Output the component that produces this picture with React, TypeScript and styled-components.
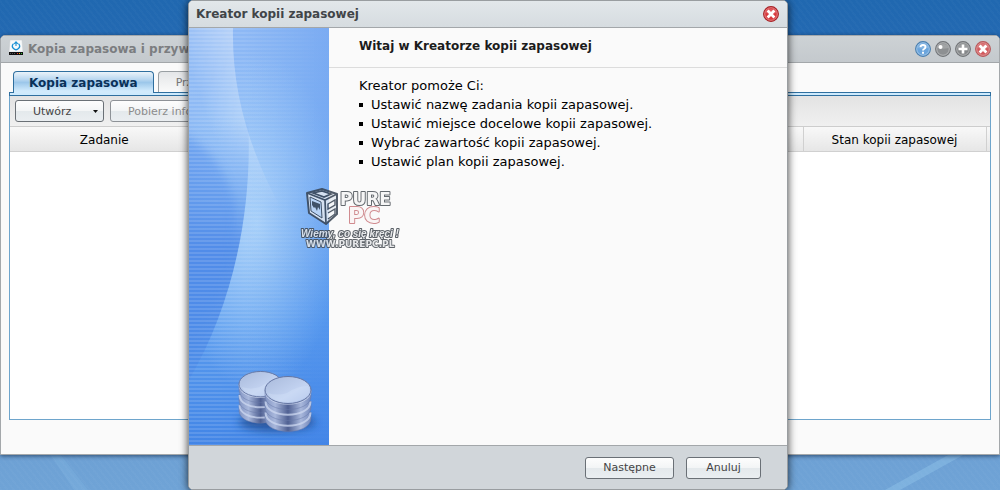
import React from "react";
import styled, { createGlobalStyle } from "styled-components";

const GlobalStyle = createGlobalStyle`
  * { box-sizing: border-box; }
  body { margin: 0; }
  body, button { font-family: "DejaVu Sans", Verdana, sans-serif; font-size: 11px; }
`;

const Desktop = styled.main`
  position: relative;
  min-height: 100vh;
  padding-top: 35px;
  overflow: hidden;
  background:
    repeating-linear-gradient(52deg, rgba(255, 255, 255, 0.02) 0 2px, transparent 2px 5px),
    linear-gradient(#2068b0 0, #2369b2 35px, #6c9fd3 430px, #6fa3d6 100%);
`;

const DesktopGlow = styled.svg`
  position: absolute;
  inset: auto 0 0 0;
  width: 100%;
  height: 40px;
`;

const TitleBar = styled.header<{ $active?: boolean }>`
  display: flex;
  align-items: center;
  gap: 5px;
  height: 27px;
  padding: ${(p) => (p.$active ? "0 8px 0 7px" : "0 8px")};
  border-bottom: 1px solid #a3a7aa;
  border-radius: 4px 4px 0 0;
  background: ${(p) =>
    p.$active ? "linear-gradient(#e2e7ea, #d6dce0)" : "linear-gradient(#cdd2d5, #c4c9cd)"};
  color: ${(p) => (p.$active ? "#414548" : "#7b7d80")};
`;

const WindowTitle = styled.h1`
  flex: 1;
  margin: 0;
  font-size: 12px;
  line-height: 16px;
  white-space: nowrap;
`;

const WindowFrame = styled.section`
  position: relative;
  border: 1px solid #a4a8ab;
  border-radius: 5px 5px 0 0;
  background: #fafafa;
  box-shadow: 0 1px 4px rgba(0, 20, 50, 0.6);
`;

const WindowBody = styled.div`
  padding: 8px 8px 34px;
`;

const Controls = styled.div`
  display: flex;
  gap: 4px;
`;

const RoundButton = styled.button`
  display: block;
  width: 16px;
  height: 16px;
  padding: 0;
  border: 0;
  background: none;
  svg { display: block; }
`;

const TabStrip = styled.div`
  display: flex;
  gap: 4px;
  padding: 0 4px;
  height: 21px;
`;

const Tab = styled.button<{ $selected?: boolean }>`
  height: ${(p) => (p.$selected ? 22 : 21)}px;
  padding: 0 ${(p) => (p.$selected ? 15 : 17)}px;
  border: 1px solid ${(p) => (p.$selected ? "#2f6f9f" : "#999fa3")};
  border-bottom: 0;
  border-radius: 4px 4px 0 0;
  background: ${(p) =>
    p.$selected
      ? "linear-gradient(#eaf3fa 0, #b9d7f0 35%, #9cc7ea 50%, #d0eafc 90%)"
      : "linear-gradient(#e4e6e8, #fafafa)"};
  color: ${(p) => (p.$selected ? "#0a3159" : "#777")};
  font-size: ${(p) => (p.$selected ? 12 : 11)}px;
  font-weight: ${(p) => (p.$selected ? "bold" : "normal")};
  white-space: nowrap;
`;

const Panel = styled.div`
  border: 1px solid #6ea5cc;
  border-top: 0;
  background: #fff;
`;

const TabLine = styled.div`
  height: 4px;
  margin: 0 -1px;
  border: 1px solid #2f6f9f;
  background: #cdeafd;
`;

const Toolbar = styled.div`
  display: flex;
  align-items: center;
  gap: 6px;
  height: 31px;
  padding: 0 5px;
  border-bottom: 1px solid #cdcdcd;
  background: linear-gradient(#e3e3e3, #f0f0f0);
`;

const PushButton = styled.button<{ $width?: number }>`
  display: flex;
  align-items: center;
  justify-content: center;
  height: 22px;
  min-width: ${(p) => p.$width ?? 0}px;
  padding: 0 17px;
  border: 1px solid #6a7076;
  border-radius: 3px;
  background: linear-gradient(#fdfdfd 0, #f3f5f6 48%, #e4e9ec 52%, #eaeef1 100%);
  color: #444;
  white-space: nowrap;
  &:disabled { border-color: #8e9297; color: #8c8c8c; }
`;

const MenuButton = styled(PushButton)`
  justify-content: space-between;
  padding: 0 5px 0 17px;
`;

const Grid = styled.table`
  width: 100%;
  table-layout: fixed;
  border-collapse: collapse;
  th {
    height: 24px;
    padding: 2px 0 0;
    border-bottom: 1px solid #d0d0d0;
    border-right: 1px solid #d0d0d0;
    background: linear-gradient(#f8f8f8, #e6e6e6);
    color: #000;
    font-size: 12px;
    font-weight: normal;
  }
  th:last-child { border-right: 0; }
  td { height: 268px; padding: 0; }
`;

const Dialog = styled.section`
  position: absolute;
  top: 0;
  left: 188px;
  width: 600px;
  border: 1px solid #999da0;
  border-radius: 5px;
  background: #fafafa;
  box-shadow: 0 1px 8px rgba(0, 0, 0, 0.75);
`;

const DialogBody = styled.div`
  display: flex;
  min-height: 417px;
`;

const Banner = styled.svg`
  flex: none;
  display: block;
  width: 140px;
  height: 417px;
`;

const Intro = styled.div`
  flex: 1;
  color: #000;
`;

const IntroTitle = styled.h2`
  height: 40px;
  margin: 0;
  padding: 0 30px;
  border-bottom: 1px solid #dcdcdc;
  color: #1c1c1c;
  font-size: 12px;
  line-height: 36px;
`;

const IntroText = styled.div`
  padding: 8px 30px;
  font-size: 13px;
  line-height: 19px;
  p { margin: 0; }
  ul { margin: 0; padding: 0; list-style: none; }
  li { display: flex; align-items: center; gap: 8px; white-space: nowrap; }
  li::before { content: ""; width: 4px; height: 4px; background: #000; }
`;

const DialogFooter = styled.footer`
  display: flex;
  align-items: center;
  justify-content: flex-end;
  gap: 12px;
  height: 44px;
  padding: 0 26px;
  border-top: 1px solid #a3a7aa;
  border-radius: 0 0 4px 4px;
  background: #d1d6da;
`;

const Watermark = styled.svg`
  position: absolute;
  top: 184px;
  left: 109px;
  width: 106px;
  height: 66px;
  pointer-events: none;
`;

type Kind = "help" | "min" | "max" | "close" | "active";
const rim = { help: "#4b7fae", min: "#737679", max: "#737679", close: "#b65a5c", active: "#a62327" };
const face = { help: "#6ba5dc", min: "#8d9092", max: "#85888a", close: "#d15b5e", active: "#d8393d" };

function Orb({ kind, label }: { kind: Kind; label: string }) {
  return (
    <RoundButton aria-label={label}>
      <svg width="16" height="16" viewBox="0 0 16 16">
        <circle cx="8" cy="8" r="7.4" fill={face[kind]} stroke={rim[kind]} strokeWidth="1.1" />
        <circle cx="8" cy="8" r="6.3" fill="none" stroke="#fff" strokeOpacity=".35" />
        <path d="M2.5 7a5.6 5 0 0 1 11 0Q8 8.5 2.5 7z" fill="#fff" opacity=".18" />
        {kind === "help" && (
          <g fill="none" stroke="#fff" strokeWidth="1.9">
            <path d="M5.5 6.2Q5.7 4 8 4q2.5 0 2.5 2.1 0 1.2-1.4 1.9-1.1.5-1.1 1.600" />
            <path d="M8 10.800v1.900" />
          </g>
        )}
        {kind === "min" && <circle cx="5.5" cy="6" r="2" fill="#fff" />}
        {kind === "max" && <path d="M8 3.500v9M3.500 8h9" stroke="#fff" strokeWidth="2.6" />}
        {(kind === "close" || kind === "active") && (
          <path d="M4.6 4.6l6.8 6.8M11.4 4.6l-6.8 6.8" stroke="#fff" strokeWidth="2.8" />
        )}
      </svg>
    </RoundButton>
  );
}

function BackupIcon() {
  return (
    <svg width="14" height="18" viewBox="0 0 14 18" aria-hidden="true">
      <path d="M1 0h12l1 12H0z" fill="#f7f9fa" stroke="#c4c8cc" strokeWidth=".5" />
      <path d="M4.5 3.6A3.5 3.5 0 1 0 9.5 3.6" fill="none" stroke="#1a91d4" strokeWidth="1.3" />
      <path d="M7 6V2M5.2 3.8L7 1.8 8.8 3.8" fill="none" stroke="#1a91d4" strokeWidth="1.1" />
      <path d="M0 12h14v3H0z" fill="#111" />
      <path d="M1 13.5h6" stroke="#555" strokeDasharray="1 1" />
      <path d="M8 13.5h1" stroke="#e33" />
      <path d="M10 13.5h1" stroke="#fa0" />
      <path d="M12 13.5h1" stroke="#3c3" />
    </svg>
  );
}

function Stack({ x, y, scale = 1 }: { x: number; y: number; scale?: number }) {
  return (
    <g transform={`translate(${x} ${y}) scale(${scale})`}>
      {[22, 11, 0].map((dy) => (
        <g key={dy} transform={`translate(0 ${dy})`}>
          <path d="M0 14v6c0 18 46 18 46 0v-6z" fill="url(#metal)" stroke="#6678a8" strokeWidth=".5" />
          <path d="M.5 14.5c0 17.5 45 17.5 45 0" fill="none" stroke="#cdd8f0" strokeWidth="2" opacity=".75" />
        </g>
      ))}
      <ellipse cx="23" cy="14" rx="23" ry="13.5" fill="url(#lid)" stroke="#6475a2" strokeWidth="1" />
      <path d="M22 17q10-7 21-7a21 11.5 0 0 1-20 16q-16 0-20-9 9 3 19 0z" fill="#dce8fc" opacity=".3" />
    </g>
  );
}

function WizardBanner() {
  return (
    <Banner viewBox="0 0 140 417" aria-hidden="true">
      <defs>
        <linearGradient id="base" x1="0" y1="0" x2="0" y2="1">
          <stop offset="0" stopColor="#8db8f5" />
          <stop offset=".35" stopColor="#84b6f5" />
          <stop offset=".7" stopColor="#5a9cef" />
          <stop offset="1" stopColor="#4285e6" />
        </linearGradient>
        <radialGradient id="glow" gradientUnits="userSpaceOnUse" cx="0" cy="0" r="1" gradientTransform="translate(68 195) scale(85 170)">
          <stop offset="0" stopColor="#b6dafb" stopOpacity=".8" />
          <stop offset="1" stopColor="#b6dafb" stopOpacity="0" />
        </radialGradient>
        <linearGradient id="edge" x1="0" x2="1">
          <stop offset=".4" stopColor="#4486ea" stopOpacity="0" />
          <stop offset="1" stopColor="#4486ea" stopOpacity=".25" />
        </linearGradient>
        <linearGradient id="rim" gradientUnits="userSpaceOnUse" x1="0" y1="40" x2="80" y2="10">
          <stop offset="0" stopColor="#fff" stopOpacity=".05" />
          <stop offset=".6" stopColor="#fff" stopOpacity=".35" />
        </linearGradient>
        <linearGradient id="sink" x1="0" y1="0" x2="0" y2="1">
          <stop offset="0" stopColor="#fff" />
          <stop offset=".6" stopColor="#fff" />
          <stop offset="1" stopColor="#fff" stopOpacity="0" />
        </linearGradient>
        <mask id="sweepFade"><path d="M0 0h140v180H0z" fill="url(#sink)" /></mask>
        <linearGradient id="dark" gradientUnits="userSpaceOnUse" x1="0" y1="90" x2="0" y2="352">
          <stop offset="0" stopColor="#6ea3f1" stopOpacity="0" />
          <stop offset=".3" stopColor="#6ba2ee" stopOpacity=".75" />
          <stop offset=".5" stopColor="#5690e9" />
          <stop offset="1" stopColor="#4b8ce8" />
        </linearGradient>
        <clipPath id="leftOfArc"><path d="M0 90H59C64 180 45 275 0 352z" /></clipPath>
        <pattern id="lines" width="4" height="4" patternUnits="userSpaceOnUse">
          <path d="M0 1h140" stroke="#fff" strokeOpacity=".13" strokeWidth="2" />
        </pattern>
        <linearGradient id="fade" x1="0" x2="1">
          <stop offset=".2" stopColor="#fff" />
          <stop offset=".9" stopColor="#fff" stopOpacity=".1" />
        </linearGradient>
        <mask id="lineFade"><path d="M0 0h140v417H0z" fill="url(#fade)" /></mask>
        <linearGradient id="metal" x1="0" x2="1">
          <stop offset="0" stopColor="#8395c3" />
          <stop offset=".22" stopColor="#a9b8dc" />
          <stop offset=".5" stopColor="#4f6092" />
          <stop offset=".78" stopColor="#a9b8dc" />
          <stop offset="1" stopColor="#7589bc" />
        </linearGradient>
        <linearGradient id="lid" x1="0" y1="0" x2="1" y2="1">
          <stop offset="0" stopColor="#a9badb" />
          <stop offset=".6" stopColor="#c3d3f1" />
          <stop offset="1" stopColor="#a9bde6" />
        </linearGradient>
        <filter id="soft" x="-30%" y="-80%" width="160%" height="260%"><feGaussianBlur stdDeviation="4" /></filter>
      </defs>
      <path d="M0 0h140v417H0z" fill="url(#base)" />
      <path d="M0 0h140v417H0z" fill="url(#glow)" />
      <path d="M0 0h140v417H0z" fill="url(#edge)" />
      <path d="M0 0H44Q42 90 92 180H0z" fill="url(#rim)" mask="url(#sweepFade)" />
      <path d="M0 90H59C64 180 45 275 0 352z" fill="url(#dark)" />
      <g clipPath="url(#leftOfArc)">
        <path d="M-10 105Q30 120 46 175 50 220 30 270L-10 330z" fill="#4c88e8" opacity=".4" filter="url(#soft)" />
      </g>
      <path d="M0 0h140v417H0z" fill="url(#lines)" mask="url(#lineFade)" />
      <ellipse cx="88" cy="394" rx="38" ry="9" fill="#153a78" opacity=".65" filter="url(#soft)" />
      <Stack x={50} y={343} scale={0.94} />
      <Stack x={76} y={348} />
    </Banner>
  );
}

function PurePcMark() {
  const outline = { paintOrder: "stroke" as const, strokeLinejoin: "round" as const };
  return (
    <Watermark viewBox="0 0 106 66" role="img" aria-label="Pure PC">
      <g opacity=".85">
        <path d="M9 8L24 4l15 5v20L28 39 11 28z" fill="#e6ebf1" stroke="#364251" strokeWidth="2" strokeLinejoin="round" />
        <path d="M9 8l18 7 12-6M27 15l1 24M15 8l9-2 9 3-7 3z" fill="none" stroke="#364251" strokeWidth="1.7" />
        <path d="M12 12l11 5 1 16-11-7z" fill="#c3daf6" stroke="#364251" />
        <path d="M14 16l8 3v6l-2-3-1 4-2-4-1 1-2-3z" fill="#364251" />
        <path d="M30 19l7-4v5l-7 4zM30 28l7-4v5l-7 5" fill="#f4f6f8" stroke="#364251" strokeWidth="1.4" />
        <g fontFamily="DejaVu Sans, sans-serif" fontWeight="bold" style={outline}>
          <text x="42" y="20" fontSize="17" fill="#f6f6f6" stroke="#4b5157" strokeWidth="2">PURE</text>
          <text x="50" y="38" fontSize="22" fill="#faf5f5" stroke="#c9777c" strokeWidth="2">PC</text>
          <text x="8" y="62" fontSize="9" fill="#e4e6e8" stroke="#454b52" strokeWidth="1.8">WWW.PUREPC.PL</text>
        </g>
        <text x="3" y="52" fontFamily="Liberation Sans, sans-serif" fontStyle="italic" fontWeight="bold" fontSize="10" fill="#e4e6e8" stroke="#3d444c" strokeWidth="2" style={outline}>Wiemy, co się kręci !</text>
      </g>
    </Watermark>
  );
}

const steps = [
  "Ustawić nazwę zadania kopii zapasowej.",
  "Ustawić miejsce docelowe kopii zapasowej.",
  "Wybrać zawartość kopii zapasowej.",
  "Ustawić plan kopii zapasowej.",
];

function BackupWindow() {
  return (
    <WindowFrame>
      <TitleBar>
        <BackupIcon />
        <WindowTitle>Kopia zapasowa i przywracanie</WindowTitle>
        <Controls>
          <Orb kind="help" label="Pomoc" />
          <Orb kind="min" label="Minimalizuj" />
          <Orb kind="max" label="Maksymalizuj" />
          <Orb kind="close" label="Zamknij" />
        </Controls>
      </TitleBar>
      <WindowBody>
        <TabStrip role="tablist">
          <Tab role="tab" aria-selected="true" $selected>Kopia zapasowa</Tab>
          <Tab role="tab" aria-selected="false">Przywracanie</Tab>
        </TabStrip>
        <Panel>
          <TabLine />
          <Toolbar>
            <MenuButton $width={89}>
              Utwórz
              <svg width="5" height="3" aria-hidden="true"><path d="M0 0h5L2.5 3z" fill="#111" /></svg>
            </MenuButton>
            <PushButton disabled>Pobierz informacje</PushButton>
          </Toolbar>
          <Grid>
            <colgroup>
              <col style={{ width: 189 }} />
              <col />
              <col style={{ width: 183 }} />
              <col style={{ width: 4 }} />
            </colgroup>
            <thead>
              <tr><th scope="col">Zadanie</th><th /><th scope="col">Stan kopii zapasowej</th><th /></tr>
            </thead>
            <tbody><tr><td colSpan={4} /></tr></tbody>
          </Grid>
        </Panel>
      </WindowBody>
    </WindowFrame>
  );
}

export default function App() {
  return (
    <Desktop>
      <GlobalStyle />
      <DesktopGlow viewBox="0 0 1000 40" preserveAspectRatio="none" aria-hidden="true">
        <path d="M885 40L950 4 965 4 900 40z" fill="#9ccdf0" opacity=".35" />
        <path d="M50 4L60 4 88 40 74 40z" fill="#9ccdf0" opacity=".15" />
      </DesktopGlow>
      <BackupWindow />
      <Dialog role="dialog" aria-labelledby="wizard-title">
        <TitleBar $active>
          <WindowTitle id="wizard-title">Kreator kopii zapasowej</WindowTitle>
          <Orb kind="active" label="Zamknij" />
        </TitleBar>
        <DialogBody>
          <WizardBanner />
          <Intro>
            <IntroTitle>Witaj w Kreatorze kopii zapasowej</IntroTitle>
            <IntroText>
              <p>Kreator pomoże Ci:</p>
              <ul>{steps.map((s) => <li key={s}>{s}</li>)}</ul>
            </IntroText>
          </Intro>
        </DialogBody>
        <DialogFooter>
          <PushButton $width={89}>Następne</PushButton>
          <PushButton $width={75}>Anuluj</PushButton>
        </DialogFooter>
        <PurePcMark />
      </Dialog>
    </Desktop>
  );
}
